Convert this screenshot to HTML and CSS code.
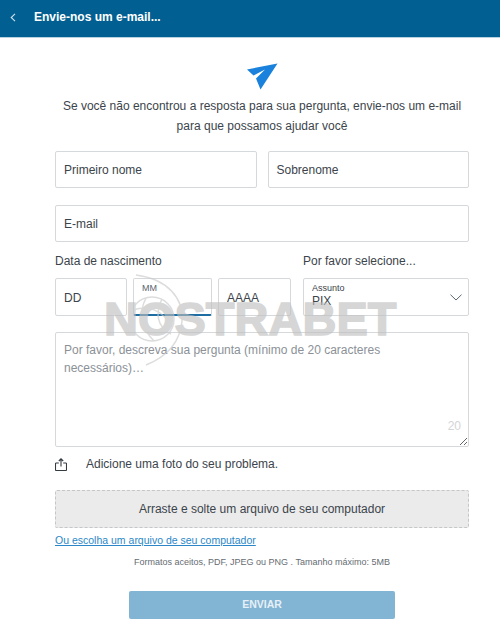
FILE: index.html
```html
<!DOCTYPE html>
<html lang="en">
<head>
    <meta charset="UTF-8">
    <meta name="viewport" content="width=device-width, initial-scale=1.0">
    <title>Envie-nos um e-mail</title>
    <link rel="stylesheet" href="styles.css">
</head>
<body>
    <header class="topbar">
        <svg class="back-icon" width="6" height="9" viewBox="0 0 6 9"><path d="M5 .8 1.2 4.5 5 8.2" fill="none" stroke="#cfe0ea" stroke-width="1.1"/></svg>
        <h1>Envie-nos um e-mail...</h1>
    </header>

    <main class="content">
        <svg class="send-icon" width="31" height="27" viewBox="0 0 31 27"><path d="M30.500.5 0 6.500 6.500 12.500 18 6.500 9 15.500 13.500 26.500Z" fill="#1a82dc"/></svg>
        <p class="intro">Se você não encontrou a resposta para sua pergunta, envie-nos um e-mail<br>para que possamos ajudar você</p>

        <!-- Name fields -->
        <div class="row name-row">
            <input type="text" class="field" placeholder="Primeiro nome">
            <input type="text" class="field" placeholder="Sobrenome">
        </div>
        <input type="text" class="field email-field" placeholder="E-mail">

        <!-- Date and subject -->
        <div class="date-subject">
            <div>
                <div class="label">Data de nascimento</div>
                <div class="date-row">
                    <input type="text" class="field date-day" placeholder="DD">
                    <div class="field date-month"><span class="mini-label">MM</span></div>
                    <input type="text" class="field date-year" placeholder="AAAA">
                </div>
            </div>
            <div>
                <div class="label">Por favor selecione...</div>
                <div class="field subject">
                    <div>
                        <div class="mini-label">Assunto</div>
                        <div class="subject-value">PIX</div>
                    </div>
                    <svg class="subject-arrow" width="12" height="7" viewBox="0 0 12 7"><path d="M.5.7 6 6 11.500.7" fill="none" stroke="#5b6670" stroke-width="1"/></svg>
                </div>
            </div>
        </div>

        <div class="message">
            <textarea class="message-input" placeholder="Por favor, descreva sua pergunta (mínimo de 20 caracteres necessários)…"></textarea>
            <span class="counter">20</span>
        </div>

        <!-- Upload -->
        <div class="photo-row">
            <svg width="12" height="13" viewBox="0 0 12 13"><path d="M3.800 5H1.300a.8.800 0 0 0-.8.800v5.900a.8.800 0 0 0 .8.800h9.400a.8.800 0 0 0 .8-.8V5.800a.8.800 0 0 0-.8-.8H8.200M6 8.500V1M3.800 3 6 .8 8.200 3" fill="none" stroke="#333b42" stroke-width="1.100"/></svg>
            <span>Adicione uma foto do seu problema.</span>
        </div>
        <div class="dropzone">Arraste e solte um arquivo de seu computador</div>
        <a href="#" class="file-link">Ou escolha um arquivo de seu computador</a>
        <p class="formats">Formatos aceitos, PDF, JPEG ou PNG . Tamanho máximo: 5MB</p>
        <button class="submit">ENVIAR</button>
    </main>

    <div class="watermark">
        <svg class="watermark-globe" width="70" height="96" viewBox="0 0 70 96"><g fill="none" stroke="#c8c8c8" stroke-width="1.500"><path d="M20 4C52 8 68 28 66 50 64 72 50 86 30 94"/><circle cx="36" cy="48" r="22"/><path d="M15 40C30 33 46 38 56 56M30 27C22 42 26 58 38 70M46 28C39 42 41 56 55 63"/></g></svg>
        <span>NOSTRABET</span>
    </div>
</body>
</html>
```

FILE: styles.css
```css
* {
    box-sizing: border-box;
}

body {
    font-family: "Liberation Sans", Arial, sans-serif;
    margin: 0;
    height: 628px;
    overflow: hidden;
    position: relative;
    background-color: #ffffff;
    color: #3c444b;
}

.topbar {
    display: flex;
    align-items: center;
    height: 38px;
    padding: 0 0 3px 10px;
    background-color: #025f92;
    border-bottom: 1px solid #b9d3e2;
}

.topbar h1 {
    margin: 0 0 0 18px;
    font-size: 12px;
    font-weight: bold;
    color: #ffffff;
}

.content {
    display: flex;
    flex-direction: column;
    padding: 25px 31px 0 55px;
}

.send-icon {
    align-self: center;
}

.intro {
    margin: 6px 0 0;
    font-size: 12px;
    line-height: 20px;
    text-align: center;
    width: 414px;
}

.row {
    display: flex;
    gap: 11px;
}

.name-row {
    margin-top: 15px;
}

.name-row .field {
    width: 201.500px;
    min-width: 0;
}

.field {
    height: 37px;
    padding: 1px 8px 0;
    border: 1px solid #d6d9dc;
    border-radius: 2px;
    background: transparent;
    font-family: inherit;
    font-size: 12px;
    color: #3c444b;
    outline: none;
}

.field::placeholder {
    color: #3c444b;
    opacity: 1;
}

.email-field {
    width: 414px;
    margin-top: 17px;
}

.date-subject {
    display: flex;
    gap: 12px;
    margin-top: 12px;
}

.label {
    height: 24px;
    font-size: 12px;
    line-height: 14px;
}

.date-row {
    display: flex;
    gap: 6px;
}

.date-row .field {
    height: 38px;
}

.date-day {
    width: 72px;
}

.date-month {
    width: 79px;
    padding: 4px 8px;
    border-bottom: 2px solid #1f6ea3;
}

.date-year {
    width: 73px;
}

.mini-label {
    display: block;
    font-size: 9px;
    line-height: 11px;
    color: #5b6670;
}

.subject {
    display: flex;
    justify-content: space-between;
    width: 166px;
    height: 38px;
    padding: 4px 6px 0 8px;
}

.subject .mini-label {
    color: #3c444b;
}

.subject-value {
    font-size: 12px;
    line-height: 14px;
}

.subject-arrow {
    margin-top: 11px;
}

.message {
    position: relative;
    margin-top: 16px;
}

.message-input {
    display: block;
    width: 414px;
    height: 115px;
    padding: 8px 8px;
    border: 1px solid #d6d9dc;
    border-radius: 2px;
    background: transparent;
    font-family: inherit;
    font-size: 12px;
    line-height: 18px;
    outline: none;
}

.message-input::placeholder {
    color: #8b9197;
    opacity: 1;
}

.counter {
    position: absolute;
    right: 8px;
    bottom: 14px;
    font-size: 12px;
    color: #d3d5d7;
}

.photo-row {
    display: flex;
    align-items: center;
    gap: 19px;
    height: 14px;
    margin-top: 10px;
    font-size: 12px;
}

.dropzone {
    display: flex;
    align-items: center;
    justify-content: center;
    height: 38px;
    margin-top: 19px;
    border: 1px dashed #c4c6c8;
    border-radius: 2px;
    background-color: #ebebeb;
    font-size: 12px;
}

.file-link {
    margin-top: 6px;
    font-size: 10.500px;
    line-height: 13px;
    color: #2b87c8;
}

.formats {
    margin: 10px 0 0;
    font-size: 9px;
    line-height: 11px;
    text-align: center;
    color: #666c72;
}

.submit {
    align-self: center;
    width: 266px;
    height: 28px;
    margin-top: 23px;
    padding: 0 0 2px;
    border: none;
    border-radius: 2px;
    background-color: #82b4d3;
    color: #e6f0f6;
    font-family: inherit;
    font-size: 10.500px;
    font-weight: bold;
}

/* Stock image watermark over the form */
.watermark {
    position: absolute;
    left: 104px;
    top: 295px;
    font-size: 47px;
    line-height: 48px;
    font-weight: bold;
    color: #bebebe;
    -webkit-text-stroke: 1.5px #bebebe;
    opacity: 0.62;
    pointer-events: none;
}

.watermark-globe {
    position: absolute;
    left: 12px;
    top: -24px;
}

.watermark span {
    position: relative;
}
```
